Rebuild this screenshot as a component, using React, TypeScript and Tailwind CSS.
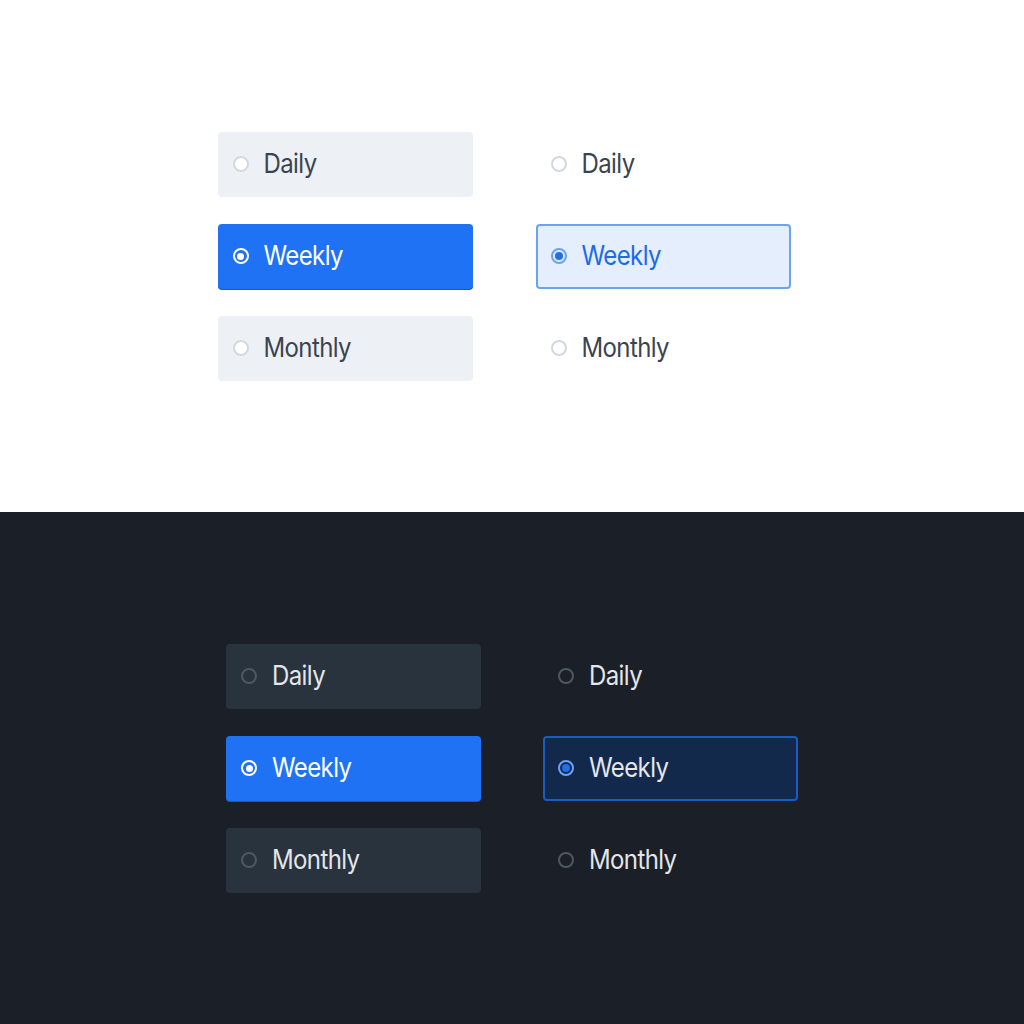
import React from "react";

type Variant = "filled" | "plain";
type Theme = "light" | "dark";

function Radio({ selected, variant, theme }: { selected: boolean; variant: Variant; theme: Theme }) {
  if (selected && variant === "filled") {
    return (
      <span className="flex h-[16px] w-[16px] shrink-0 items-center justify-center rounded-full border-2 border-white">
        <span className="h-[7px] w-[7px] rounded-full bg-white" />
      </span>
    );
  }
  if (selected) {
    return (
      <span className="flex h-[16px] w-[16px] shrink-0 items-center justify-center rounded-full border-2 border-[#6aa3f7]">
        <span className="h-[8px] w-[8px] rounded-full bg-[#1f6ff0]" />
      </span>
    );
  }
  return theme === "light" ? (
    <span className="h-[16px] w-[16px] shrink-0 rounded-full border-2 border-[#d3d9e0] bg-white" />
  ) : (
    <span className="h-[16px] w-[16px] shrink-0 rounded-full border-2 border-[#4d5863]" />
  );
}

function Option({ label, selected, variant, theme }: { label: string; selected: boolean; variant: Variant; theme: Theme }) {
  let cls = "";
  let text = "";
  if (theme === "light") {
    if (variant === "filled") {
      cls = selected ? "bg-[#1f72f4] shadow-[0_1px_0_#0e5ad8]" : "bg-[#edf1f5]";
      text = selected ? "text-white" : "text-[#3b4350]";
    } else {
      cls = selected ? "bg-[#e4eefc] border-2 border-[#6ba2f5]" : "";
      text = selected ? "text-[#1c6ae8]" : "text-[#3b4350]";
    }
  } else {
    if (variant === "filled") {
      cls = selected ? "bg-[#1f72f4] shadow-[0_1px_0_#0e5ad8]" : "bg-[#28333e]";
      text = selected ? "text-white" : "text-[#e3e6ea]";
    } else {
      cls = selected ? "bg-[#13294c] border-2 border-[#1c5ac4]" : "";
      text = "text-[#e3e6ea]";
    }
  }
  const pad = variant === "plain" && selected ? "pl-[13px]" : "pl-[15px]";
  return (
    <div className={`flex h-[65px] w-[255px] items-center gap-[15px] rounded-[4px] ${pad} ${cls}`}>
      <Radio selected={selected} variant={variant} theme={theme} />
      <span className={`inline-block origin-left scale-y-[1.1] text-[24px] tracking-[-0.6px] ${text}`}>{label}</span>
    </div>
  );
}

function Group({ variant, theme }: { variant: Variant; theme: Theme }) {
  return (
    <div className="flex flex-col gap-[27px]">
      <Option label="Daily" selected={false} variant={variant} theme={theme} />
      <Option label="Weekly" selected={true} variant={variant} theme={theme} />
      <Option label="Monthly" selected={false} variant={variant} theme={theme} />
    </div>
  );
}

export default function App() {
  return (
    <div className="flex h-[1024px] w-[1024px] flex-col" style={{ fontFamily: "Inter, 'Noto Sans', sans-serif" }}>
      <div className="flex h-[512px] items-center justify-center bg-white pr-[16px]">
        <div className="flex gap-[63px]">
          <Group variant="filled" theme="light" />
          <Group variant="plain" theme="light" />
        </div>
      </div>
      <div className="flex h-[512px] items-center justify-center bg-[#1b1f27]">
        <div className="flex gap-[62px]">
          <Group variant="filled" theme="dark" />
          <Group variant="plain" theme="dark" />
        </div>
      </div>
    </div>
  );
}
